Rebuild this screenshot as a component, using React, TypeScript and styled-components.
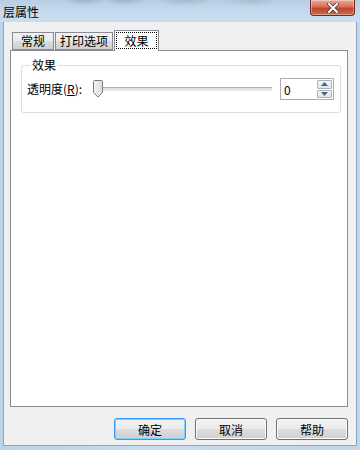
import React from 'react'
import styled, { createGlobalStyle } from 'styled-components'

const Global = createGlobalStyle`
  html, body {
    margin: 0;
    padding: 0;
    width: 360px;
    height: 450px;
    overflow: hidden;
    font-family: "Noto Sans CJK SC", "Liberation Sans", sans-serif;
    font-size: 12px;
    color: #000;
  }
`

const Window = styled.div`
  width: 360px;
  height: 450px;
  display: flex;
  flex-direction: column;
  background: linear-gradient(90deg, #bcd2e9 0%, #c9dcef 40%, #c2d6ec 100%);
  box-sizing: border-box;
  padding: 0 3px 4px 3px;
`

const TitleBar = styled.div`
  height: 23px;
  display: flex;
  align-items: flex-start;
  justify-content: space-between;
  margin: 0 -3px;
  background:
    radial-gradient(ellipse 22px 6px at 85px 0px, rgba(90, 110, 140, 0.3), transparent),
    radial-gradient(ellipse 22px 6px at 125px 0px, rgba(90, 110, 140, 0.3), transparent),
    radial-gradient(ellipse 30px 6px at 185px 0px, rgba(110, 125, 150, 0.3), transparent),
    radial-gradient(ellipse 30px 6px at 250px 0px, rgba(110, 125, 150, 0.25), transparent),
    linear-gradient(180deg, #b8cee5 0%, #c8dbee 60%, #cadcee 100%);
`

const Title = styled.span`
  padding: 5px 0 0 3px;
  font-size: 12px;
  line-height: 14px;
  color: #000;
`

const CloseButton = styled.div`
  width: 43px;
  height: 15px;
  margin-right: 5px;
  border: 1px solid #6e2a22;
  border-top: none;
  border-radius: 0 0 4px 4px;
  background: linear-gradient(180deg, #e9a99a 0%, #d8715c 45%, #c0442b 55%, #cf6a4f 100%);
  display: flex;
  align-items: center;
  justify-content: center;
  box-shadow: inset 0 0 0 1px rgba(255, 255, 255, 0.35);
`

const Client = styled.div`
  flex: 1;
  background: #f0f0f0;
  display: flex;
  flex-direction: column;
  padding: 8px 8px 5px 6px;
  border-left: 1px solid #8ea4bd;
  border-right: 1px solid #8ea4bd;
  border-bottom: 1px solid #8ea4bd;
`

const TabRow = styled.div`
  display: flex;
  align-items: flex-end;
  padding-left: 2px;
  height: 20px;
`

const Tab = styled.div<{ $active?: boolean; $w: number }>`
  width: ${(p) => p.$w}px;
  height: ${(p) => (p.$active ? '21px' : '18px')};
  box-sizing: border-box;
  margin-right: ${(p) => (p.$active ? '0' : '1px')};
  margin-bottom: ${(p) => (p.$active ? '-1px' : '0')};
  border: 1px solid #898c95;
  border-bottom: ${(p) => (p.$active ? 'none' : '1px solid #898c95')};
  background: ${(p) =>
    p.$active ? '#fff' : 'linear-gradient(180deg, #f2f2f2 0%, #ebebeb 50%, #dddddd 51%, #cfcfcf 100%)'};
  display: flex;
  align-items: center;
  justify-content: center;
  padding-bottom: ${(p) => (p.$active ? '2px' : '0')};
  line-height: 16px;
  font-size: 12px;
  position: relative;
  z-index: ${(p) => (p.$active ? 2 : 1)};
`

const FocusLabel = styled.span`
  outline: 1px dotted #000;
  padding: 0 7px;
  line-height: 15px;
`

const Panel = styled.div`
  height: 357px;
  box-sizing: border-box;
  border: 1px solid #898c95;
  background: #fff;
  padding: 7px 7px 0 10px;
`

const Group = styled.fieldset`
  margin: 0;
  border: 1px solid #d5dfe5;
  border-radius: 3px;
  padding: 0 6px 0 5px;
  height: 55px;
  box-sizing: border-box;
`

const Legend = styled.legend`
  padding: 0 2px;
  margin-left: 3px;
  font-size: 12px;
  line-height: 14px;
`

const Row = styled.div`
  display: flex;
  align-items: center;
  margin-top: 6px;
`

const Label = styled.span`
  width: 65px;
  line-height: 14px;
`

const Accel = styled.span`
  text-decoration: underline;
`

const Slider = styled.div`
  position: relative;
  width: 180px;
  height: 20px;
  display: flex;
  align-items: center;
`

const Track = styled.div`
  flex: 1;
  height: 2px;
  margin-left: 2px;
  border-top: 1px solid #b0b0b0;
  border-bottom: 1px solid #e7eaea;
  background: #dfe3e4;
`

const Thumb = styled.svg`
  position: absolute;
  left: 0;
  top: 1px;
`

const Spin = styled.div`
  margin-left: 8px;
  width: 54px;
  height: 22px;
  box-sizing: border-box;
  border: 1px solid #abadb3;
  background: #fff;
  display: flex;
  align-items: stretch;
`

const SpinText = styled.span`
  flex: 1;
  padding-left: 3px;
  display: flex;
  align-items: center;
  font-size: 12px;
`

const SpinButtons = styled.div`
  width: 15px;
  display: flex;
  flex-direction: column;
  padding: 1px 1px 1px 0;
  gap: 1px;
`

const SpinButton = styled.div`
  flex: 1;
  border: 1px solid #a8b3c2;
  border-radius: 1px;
  background: linear-gradient(180deg, #f4f4f4 0%, #e6e6e6 100%);
  display: flex;
  align-items: center;
  justify-content: center;
`

const ButtonBar = styled.div`
  display: flex;
  justify-content: flex-end;
  gap: 9px;
  margin-top: 11px;
`

const Button = styled.div<{ $default?: boolean }>`
  width: 72px;
  height: 22px;
  box-sizing: border-box;
  border: 1px solid ${(p) => (p.$default ? '#3399ff' : '#707070')};
  border-radius: 3px;
  background: linear-gradient(180deg, #f2f2f2 0%, #ebebeb 50%, #dddddd 51%, #cfcfcf 100%);
  box-shadow: ${(p) => (p.$default ? 'inset 0 0 0 1px #7fd2f8' : 'inset 0 0 0 1px #fcfcfc')};
  display: flex;
  align-items: center;
  justify-content: center;
  font-size: 12px;
`

export default function App() {
  return (
    <>
      <Global />
      <Window>
        <TitleBar>
          <Title>层属性</Title>
          <CloseButton>
            <svg width="12" height="10" viewBox="0 0 12 10">
              <path d="M2 1 L10 9 M10 1 L2 9" stroke="#4a3a3a" strokeWidth="3.6" strokeLinecap="square" />
              <path d="M2 1 L10 9 M10 1 L2 9" stroke="#fff" strokeWidth="2" strokeLinecap="square" />
            </svg>
          </CloseButton>
        </TitleBar>
        <Client>
          <TabRow>
            <Tab $w={42}>常规</Tab>
            <Tab $w={58}>打印选项</Tab>
            <Tab $w={45} $active>
              <FocusLabel>效果</FocusLabel>
            </Tab>
          </TabRow>
          <Panel>
            <Group>
              <Legend>效果</Legend>
              <Row>
                <Label>
                  透明度(<Accel>R</Accel>):
                </Label>
                <Slider>
                  <Track />
                  <Thumb width="12" height="18" viewBox="0 0 12 18">
                    <defs>
                      <linearGradient id="tg" x1="0" y1="0" x2="1" y2="0">
                        <stop offset="0" stopColor="#f6f6f6" />
                        <stop offset="1" stopColor="#dcdcdc" />
                      </linearGradient>
                    </defs>
                    <path
                      d="M1.5 1.5 Q1.5 0.5 2.5 0.5 H9.5 Q10.5 0.5 10.5 1.5 V12.5 L6 17 L1.5 12.5 Z"
                      fill="url(#tg)"
                      stroke="#7a7a7a"
                      strokeWidth="1"
                    />
                  </Thumb>
                </Slider>
                <Spin>
                  <SpinText>0</SpinText>
                  <SpinButtons>
                    <SpinButton>
                      <svg width="7" height="4" viewBox="0 0 7 4">
                        <path d="M0 4 L3.5 0 L7 4 Z" fill="#4d6185" />
                      </svg>
                    </SpinButton>
                    <SpinButton>
                      <svg width="7" height="4" viewBox="0 0 7 4">
                        <path d="M0 0 L3.5 4 L7 0 Z" fill="#4d6185" />
                      </svg>
                    </SpinButton>
                  </SpinButtons>
                </Spin>
              </Row>
            </Group>
          </Panel>
          <ButtonBar>
            <Button $default>确定</Button>
            <Button>取消</Button>
            <Button>帮助</Button>
          </ButtonBar>
        </Client>
      </Window>
    </>
  )
}
